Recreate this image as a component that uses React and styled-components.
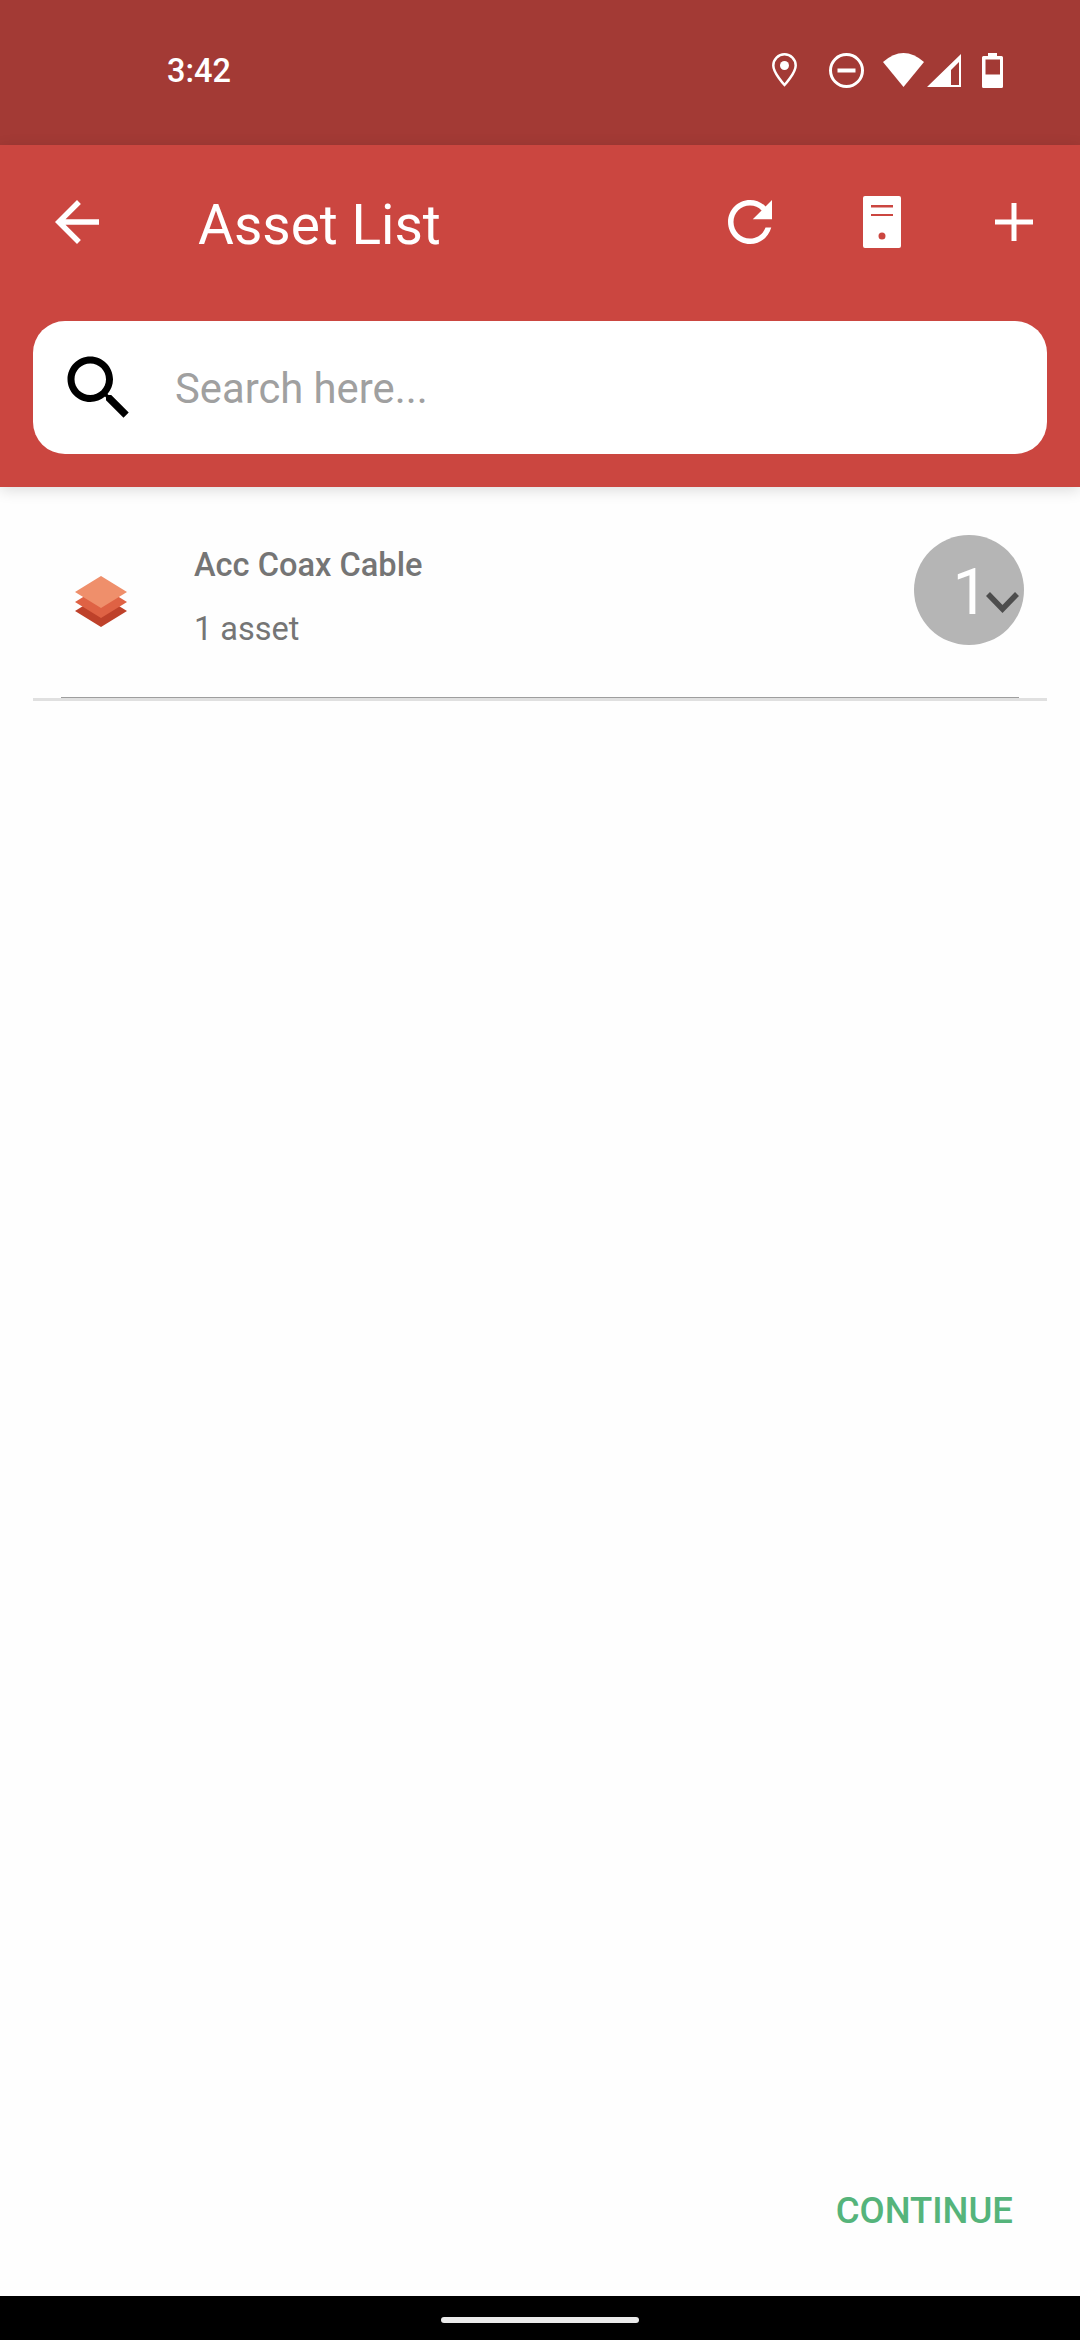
import React from 'react';
import styled, { createGlobalStyle } from 'styled-components';

const GlobalStyle = createGlobalStyle`
  html, body {
    margin: 0;
    padding: 0;
    background: #FEFEFE;
    font-family: Roboto, "Liberation Sans", sans-serif;
  }
`;

const Screen = styled.div`
  width: 1080px;
  height: 2340px;
  display: flex;
  flex-direction: column;
  overflow: hidden;
`;

const StatusBar = styled.div`
  height: 145px;
  flex: none;
  box-sizing: border-box;
  background: #A33A35;
  display: flex;
  padding: 53px 77px 0 167px;
  color: #FFFFFF;
`;

const Clock = styled.span`
  font-size: 32.5px;
  font-weight: 500;
  line-height: 36px;
`;

const StatusIcons = styled.div`
  margin-left: auto;
  display: flex;
  align-items: flex-start;
`;

const StatusIcon = styled.svg`
  display: block;
  fill: #FFFFFF;
  margin-left: ${p => p.$gap || 0}px;
`;

const Header = styled.header`
  flex: none;
  height: 342px;
  box-sizing: border-box;
  background: #CB4640;
  position: relative;
  z-index: 1;
  box-shadow: 0 3px 14px rgba(0, 0, 0, 0.14);
`;

const Toolbar = styled.div`
  height: 154px;
  display: flex;
  align-items: center;
`;

const ToolSlot = styled.div`
  flex: none;
  width: ${p => p.$width || 132}px;
  height: 154px;
  display: flex;
  align-items: center;
  justify-content: center;
  svg { display: block; fill: #FFFFFF; }
`;

const Title = styled.h1`
  flex: 1;
  margin: 6px 0 0 44px;
  font-size: 55px;
  font-weight: 400;
  line-height: 66px;
  color: #FFFFFF;
`;

const SearchBox = styled.div`
  margin: 22px 33px 0;
  height: 133px;
  box-sizing: border-box;
  background: #FFFFFF;
  border-radius: 32px;
  display: flex;
  align-items: center;
  padding-left: 24px;
  svg { display: block; fill: #000000; }
`;

const SearchHint = styled.span`
  margin: 2px 0 0 34px;
  font-size: 41.75px;
  line-height: 50px;
  color: #A0A0A0;
`;

const ListItem = styled.div`
  margin: 0 33px;
  border-bottom: 3px solid #E0E0E0;
`;

const ItemRow = styled.div`
  margin: 0 28px;
  height: 210px;
  border-bottom: 1px solid #9E9E9E;
  display: flex;
  align-items: flex-start;
`;

const StackIcon = styled.svg`
  display: block;
  flex: none;
  margin: 89px 0 0 14px;
`;

const ItemText = styled.div`
  margin: 55px 0 0 67px;
  flex: 1;
  color: #757575;
`;

const ItemName = styled.div`
  font-size: 32.6px;
  font-weight: 500;
  line-height: 46px;
`;

const ItemCount = styled.div`
  margin-top: 18px;
  font-size: 32.5px;
  line-height: 46px;
`;

const CountBadge = styled.div`
  flex: none;
  position: relative;
  width: 110px;
  height: 110px;
  box-sizing: border-box;
  margin: 48px -5px 0 0;
  padding-left: 3px;
  border-radius: 50%;
  background: #B5B5B5;
  color: #FFFFFF;
  font-size: 64px;
  font-weight: 400;
  line-height: 116px;
  text-align: center;
`;

const Chevron = styled.svg`
  position: absolute;
  left: 72px;
  top: 57px;
  display: block;
`;

const Spacer = styled.div`
  flex: 1;
`;

const Footer = styled.div`
  flex: none;
  height: 133px;
  box-sizing: border-box;
  display: flex;
  justify-content: flex-end;
  align-items: flex-start;
  padding: 26px 67px 0 0;
`;

const ContinueButton = styled.button`
  border: 0;
  padding: 0;
  height: 44px;
  background: none;
  font-family: inherit;
  font-size: 36.5px;
  font-weight: 500;
  line-height: 44px;
  color: #55B47B;
`;

const NavBar = styled.div`
  flex: none;
  height: 44px;
  background: #000000;
  display: flex;
  justify-content: center;
  padding-top: 21px;
  box-sizing: border-box;
`;

const HomePill = styled.div`
  width: 198px;
  height: 6px;
  border-radius: 3px;
  background: #EAEAEA;
`;

const App = () => (
  <Screen>
    <GlobalStyle />
    <StatusBar>
      <Clock>3:42</Clock>
      <StatusIcons>
        <StatusIcon width="25" height="34" viewBox="0 0 25 34">
          <path d="M12.5 1.3C6.3 1.3 1.3 6.3 1.3 12.5C1.3 20 12.5 32 12.5 32S23.7 20 23.7 12.5C23.7 6.3 18.7 1.3 12.5 1.3Z" fill="none" stroke="#FFFFFF" strokeWidth="2.5" />
          <circle cx="12.5" cy="12.5" r="4.5" />
        </StatusIcon>
        <StatusIcon $gap="32" width="35" height="35" viewBox="0 0 35 35">
          <path fillRule="evenodd" d="M17.5 0a17.5 17.5 0 1 0 0 35a17.5 17.5 0 1 0 0-35zM17.5 3a14.5 14.5 0 1 1 0 29a14.5 14.5 0 1 1 0-29z" />
          <rect x="8.5" y="15.5" width="18" height="4" />
        </StatusIcon>
        <StatusIcon $gap="19" width="41" height="34" viewBox="0 0 41 34">
          <path d="M0 9Q20.5 -9 41 9L20.5 34Z" />
        </StatusIcon>
        <StatusIcon $gap="3" width="35" height="35" viewBox="0 0 35 35">
          <path fillRule="evenodd" d="M34 1V34H0ZM32 9L24 17V32H32Z" />
        </StatusIcon>
        <StatusIcon $gap="20" width="21" height="35" viewBox="0 0 21 35">
          <path fillRule="evenodd" d="M6 0H15V3H19.5Q21 3 21 4.5V33.5Q21 35 19.5 35H1.5Q0 35 0 33.5V4.5Q0 3 1.5 3H6ZM3.5 6.5V21.5H18V6.5Z" />
        </StatusIcon>
      </StatusIcons>
    </StatusBar>

    <Header>
      <Toolbar>
        <ToolSlot $width={154}>
          <svg width="66" height="66" viewBox="0 0 24 24">
            <path d="M20 11H7.83l5.59-5.59L12 4l-8 8 8 8 1.41-1.41L7.83 13H20v-2z" />
          </svg>
        </ToolSlot>
        <Title>Asset List</Title>
        <ToolSlot>
          <svg width="66" height="66" viewBox="0 0 24 24">
            <path d="M17.65 6.35C16.2 4.9 14.21 4 12 4c-4.42 0-7.99 3.58-7.99 8s3.57 8 7.99 8c3.73 0 6.84-2.55 7.73-6h-2.08c-.82 2.33-3.04 4-5.65 4-3.31 0-6-2.69-6-6s2.69-6 6-6c1.66 0 3.14.69 4.22 1.78L13 11h7V4l-2.35 2.35z" />
          </svg>
        </ToolSlot>
        <ToolSlot>
          <svg width="38" height="52" viewBox="0 0 38 52">
            <path fillRule="evenodd" d="M2 0H36Q38 0 38 2V50Q38 52 36 52H2Q0 52 0 50V2Q0 0 2 0ZM8 9V11.5H30V9ZM8 18V20H30V18ZM19 36.5a3.5 3.5 0 1 0 0 7a3.5 3.5 0 1 0 0-7Z" />
          </svg>
        </ToolSlot>
        <ToolSlot>
          <svg width="38" height="38" viewBox="0 0 38 38">
            <path d="M16.5 0H21.5V16.5H38V21.5H21.5V38H16.5V21.5H0V16.5H16.5Z" />
          </svg>
        </ToolSlot>
      </Toolbar>
      <SearchBox>
        <svg width="84" height="84" viewBox="0 0 24 24">
          <path d="M15.5 14h-.79l-.28-.27C15.41 12.59 16 11.11 16 9.5 16 5.91 13.09 3 9.5 3S3 5.91 3 9.5 5.91 16 9.5 16c1.61 0 3.09-.59 4.23-1.57l.27.28v.79l5 4.99L20.49 19l-4.99-5zm-6 0C7.01 14 5 11.99 5 9.5S7.01 5 9.5 5 14 7.01 14 9.5 11.99 14 9.5 14z" />
        </svg>
        <SearchHint>Search here...</SearchHint>
      </SearchBox>
    </Header>

    <ListItem>
      <ItemRow>
        <StackIcon width="52" height="51" viewBox="0 0 52 51">
          <path d="M26 19L52 35L26 51L0 35Z" fill="#BE412A" />
          <path d="M26 10L52 26L26 42L0 26Z" fill="#DF6244" />
          <path d="M26 0L52 16L26 32L0 16Z" fill="#EF8F6B" />
        </StackIcon>
        <ItemText>
          <ItemName>Acc Coax Cable</ItemName>
          <ItemCount>1 asset</ItemCount>
        </ItemText>
        <CountBadge>
          1
          <Chevron width="33" height="21" viewBox="0 0 33 21">
            <path d="M2 2L16.5 17L31 2" fill="none" stroke="#4D4D4D" strokeWidth="5.5" />
          </Chevron>
        </CountBadge>
      </ItemRow>
    </ListItem>

    <Spacer />

    <Footer>
      <ContinueButton>CONTINUE</ContinueButton>
    </Footer>
    <NavBar>
      <HomePill />
    </NavBar>
  </Screen>
);

export default App;
